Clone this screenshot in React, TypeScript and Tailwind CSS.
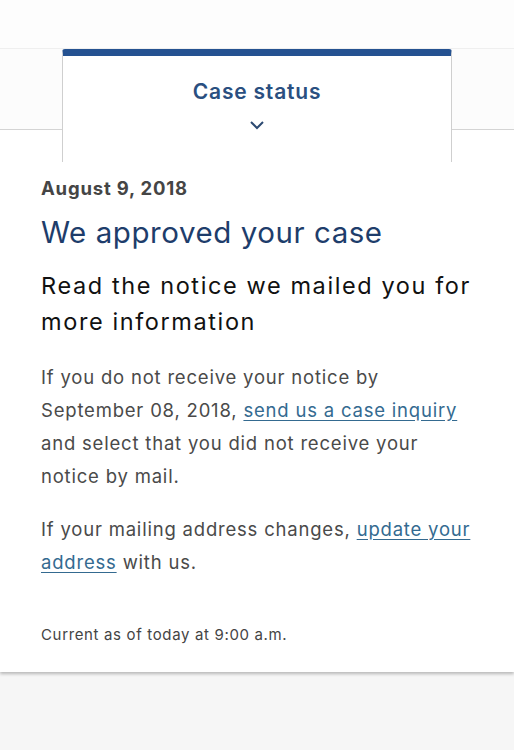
export default function App() {
    return (
        <div className="min-h-[750px] bg-[#f6f6f6] font-['Inter',sans-serif]">
            <div className="h-[49px] bg-[#fdfdfd] border-b border-[#efefef]"></div>
            <div className="bg-[#fcfcfc] flex">
                <div className="flex-1 flex flex-col">
                    <div className="flex-1"></div>
                    <div className="h-px bg-[#d4d4d4]"></div>
                </div>
                <div className="w-[390px] h-[81px] rounded-t-[3px] border-t-[7px] border-[#255291] border-x border-x-[#cfcfcf] bg-white flex flex-col items-center pt-[22px]">
                    <div className="text-[21px] leading-[28px] font-semibold tracking-[0.8px] text-[#2a4f80]">Case status</div>
                    <svg className="w-[16px] h-[10px] mt-[14px]" viewBox="0 0 16 10" fill="none" stroke="#2c4a72" strokeWidth="2">
                        <path d="M2 2l6 6 6-6"/>
                    </svg>
                </div>
                <div className="flex-1 flex flex-col">
                    <div className="flex-1"></div>
                    <div className="h-px bg-[#d4d4d4]"></div>
                </div>
            </div>
            <div className="bg-white shadow-[0_2px_3px_rgba(0,0,0,0.25)]">
                <div className="flex justify-center">
                    <div className="w-[390px] h-[32px] border-x border-[#cfcfcf]"></div>
                </div>
                <div className="px-[41px] pb-[27px]">
                    <div className="mt-[14px] text-[18.5px] leading-[24px] font-bold tracking-[0.8px] text-[#454545]">August 9, 2018</div>
                    <h1 className="mt-[14px] text-[29.5px] leading-[36px] tracking-[0.55px] text-[#1e3d6b]">We approved your case</h1>
                    <p className="mt-[18px] text-[23.5px] leading-[36px] tracking-[1.6px] text-[#111]">Read the notice we mailed you for more information</p>
                    <p className="mt-[21px] text-[18.5px] leading-[33px] tracking-[0.8px] text-[#4a4a4a]">
                        If you do not receive your notice by September 08, 2018,{" "}
                        <a className="underline text-[#346a90] underline-offset-[3px]" href="#">send us a case inquiry</a>{" "}
                        and select that you did not receive your notice by mail.
                    </p>
                    <p className="mt-[20px] text-[18.5px] leading-[33px] tracking-[0.8px] text-[#4a4a4a]">
                        If your mailing address changes,{" "}
                        <a className="underline text-[#346a90] underline-offset-[3px]" href="#">update your address</a>{" "}
                        with us.
                    </p>
                    <div className="mt-[46px] text-[15px] leading-[20px] tracking-[0.65px] text-[#444]">Current as of today at 9:00 a.m.</div>
                </div>
            </div>
        </div>
    );
}
